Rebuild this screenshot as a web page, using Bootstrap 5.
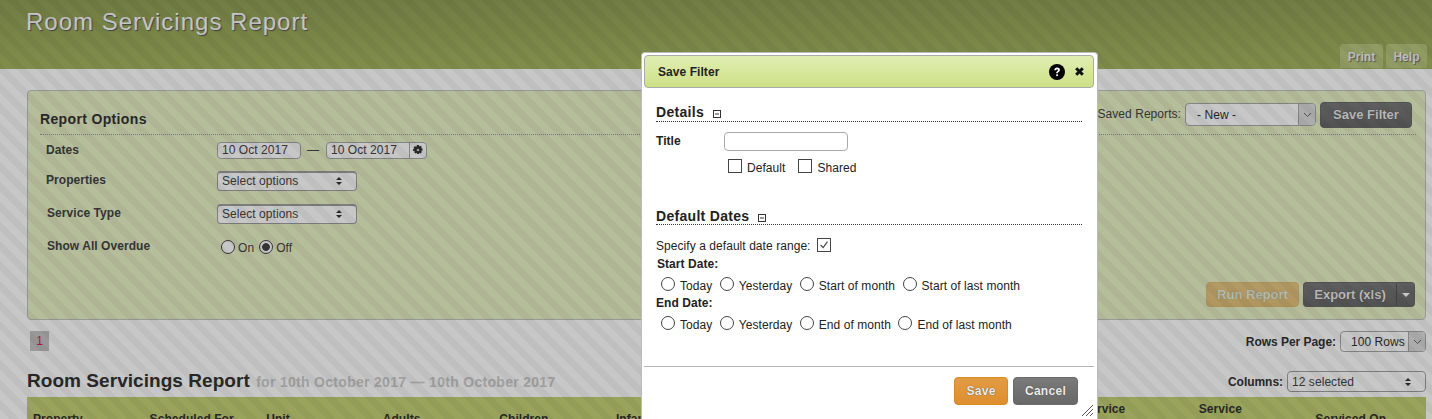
<!DOCTYPE html>
<html lang="en">
<head>
  <meta charset="UTF-8">
  <title>Room Servicings Report</title>
  <link href="https://cdn.jsdelivr.net/npm/bootstrap@5.3.6/dist/css/bootstrap.min.css" rel="stylesheet">
  <style>
    html, body { height: 419px; overflow: hidden; }
    body {
      position: relative;
      font-family: "Liberation Sans", Arial, sans-serif;
      font-size: 12px;
      letter-spacing: .06px;
      color: #333;
      background: #fff;
    }
    .stripe-overlay {
      position: absolute;
      inset: 0;
      z-index: 10;
      background: repeating-linear-gradient(45deg, rgba(0,0,0,.22) 0 7px, rgba(0,0,0,.25) 7px 14px);
    }
    .page-head {
      height: 69px;
      background: linear-gradient(#909f56, #a5b560);
      padding: 8px 5px 0 26px;
    }
    .page-title {
      font-size: 24px;
      line-height: 28px;
      letter-spacing: 1px;
      font-weight: 400;
      color: #fff;
      text-shadow: 1px 1px 1px #555;
      margin: 0;
    }
    .head-tab {
      background: #b9c77f;
      color: #f4f4f4;
      font-weight: 700;
      padding-top: 4px;
      height: 24px;
      width: 43px;
      text-align: center;
      border-radius: 3px 3px 0 0;
      text-shadow: 1px 1px 1px #666;
    }
    .head-tab-help { width: 41px; }
    .head-tabs { gap: 3px; margin-bottom: 1px; }
    .page-main { padding: 21px 6px 0 27px; }
    .opt-panel {
      height: 230px;
      padding: 11px 9px 12px 12px;
      background: #e9f2c6;
      border: 1px solid #c3c3c3;
      border-radius: 4px;
      --bs-card-bg: #e9f2c6;
    }
    .panel-top { height: 33px; border-bottom: 1px dotted #999; }
    .panel-title { font-size: 14px; font-weight: 700; margin: 0; line-height: 16px; padding-bottom: 7px; letter-spacing: .35px; }
    .opt-label { width: 177px; padding-left: 6px; font-weight: 700; color: #444; flex: none; }
    .opt-row { margin-bottom: 13px; }
    .date-input {
      height: 17px;
      width: 84px;
      line-height: 15px;
      padding: 0 4px;
      background: #fff;
      border: 1px solid #a8a8a8;
      border-radius: 4px;
      color: #444;
    }
    .date-dash { color: #444; width: 12px; margin: 0 7px 0 6px; }
    .date-group { padding-right: 0; }
    .date-gear { width: 17px; margin-left: auto; height: 15px; border-left: 1px solid #aaa; padding-right: 1px; }
    .fake-select {
      height: 20px;
      border: 1px solid #a0a0a0;
      border-width: 2px 1px 1px;
      border-radius: 4px;
      background: #fff;
      padding: 0 14px 2px 4px;
      color: #444;
    }
    .w-options { width: 140px; }
    .w-columns { width: 139px; height: 21px; border-width: 1px; padding-bottom: 0; }
    .saved-select {
      height: 23px;
      width: 131px;
      margin-top: 1px;
      border: 1px solid #aaa;
      border-radius: 4px;
      background: #fff;
      padding-left: 11px;
      overflow: hidden;
    }
    .rows-select { height: 21px; width: 86px; border: 1px solid #aaa; border-radius: 4px; background: #fff; padding-left: 10px; overflow: hidden; }
    .select-arrow { width: 17px; align-self: stretch; background: #ddd; border-left: 1px solid #aaa; margin-left: auto; }
    .btn-gray, .btn-orange {
      --bs-btn-padding-y: 0;
      --bs-btn-padding-x: 0;
      --bs-btn-font-size: 13px;
      --bs-btn-font-weight: 700;
      --bs-btn-color: #eee;
      --bs-btn-border-radius: 4px;
      white-space: nowrap;
      text-shadow: 0 0 1px #333;
    }
    .btn-gray { --bs-btn-bg: #757575; --bs-btn-border-color: #6a6a6a; background-image: linear-gradient(#7a7a7a, #686868); }
    .btn-orange { --bs-btn-bg: #e09a3e; --bs-btn-border-color: #d98a24; background-image: linear-gradient(#e39c43, #dd8f2f); }
    .btn-run { width: 93px; height: 25px; margin-right: 4px; opacity: .5; }
    .btn-export { width: 94px; height: 25px; border-radius: 4px 0 0 4px; border-right-color: #555; }
    .btn-caret { width: 18px; height: 25px; border-radius: 0 4px 4px 0; border-left: 0; }
    .btn-save-filter { width: 92px; height: 26px; margin-left: 4px; }
    .actions-row { margin-right: 1px; }
    .pager-one { width: 19px; height: 20px; margin-left: 3px; background: #c4c4c4; color: #e0204a; line-height: 20px; text-align: center; font-size: 12px; }
    .pager-row { margin-top: 11px; height: 40px; }
    .side-label { font-weight: 700; margin-right: 4px; letter-spacing: -.04px; }
    .report-title { font-size: 19px; font-weight: 700; line-height: 20px; margin: 0; letter-spacing: .05px; }
    .report-sub { font-size: 14px; color: #ccc; font-weight: 700; letter-spacing: .3px; margin-left: 1px; }
    .report-row { height: 26px; }
    .report-table { table-layout: fixed; width: 1399px; margin: 0; --bs-table-bg: transparent; }
    .report-table th {
      background: #c4d174;
      font-size: 12px;
      line-height: 20px;
      height: 44px;
      padding: 2px 6px;
      border: 0;
      color: #333;
      vertical-align: middle;
    }
    .save-modal {
      position: absolute;
      left: 641px;
      top: 52px;
      width: 457px;
      height: 367px;
      z-index: 20;
      background: #fff;
      border: 1px solid #bbb;
      border-bottom: 0;
      border-radius: 4px 4px 0 0;
      padding: 2px 3px 0 2px;
    }
    .modal-bar {
      height: 33px;
      padding: 0 9px 0 13px;
      background: linear-gradient(#e1eeb3, #cde086);
      border: 1px solid #aaa;
      border-radius: 4px;
      font-weight: 700;
      color: #222;
    }
    .modal-body-area { padding: 16px 12px 0 12px; height: 278px; color: #222; }
    .sect-head { border-bottom: 1px dotted #333; height: 18px; }
    .sect-head h6 { font-size: 14px; font-weight: 700; line-height: 16px; margin: 0; letter-spacing: .3px; }
    .minus-box { margin-left: 9px; margin-top: 6px; }
    .title-input { width: 124px; height: 19px; border: 1px solid #aaa; border-radius: 4px; padding: 0 4px; }
    .check-input.form-check-input, .dot-input.form-check-input {
      width: 14px;
      height: 14px;
      margin: 0;
      float: none;
      border: 1px solid #444;
      background-color: #fff;
      flex: none;
    }
    .check-input.form-check-input { border-radius: 0; }
    .check-input.form-check-input:checked {
      background-color: #fff;
      border-color: #444;
      background-image: url("data:image/svg+xml,%3csvg xmlns='http://www.w3.org/2000/svg' viewBox='0 0 14 14'%3e%3cpath fill='none' stroke='%23444' stroke-width='1.3' d='M3 7l3 3 5-7'/%3e%3c/svg%3e");
    }
    .dot-input.form-check-input:checked {
      background-color: #fff;
      border-color: #444;
      background-image: radial-gradient(circle, #444 0 3.5px, transparent 4.2px);
    }
    .radio-row { margin-left: 5px; height: 20px; }
    .radio-row label { margin: 3px 7.5px 0 5px; }
    .btn-modal { height: 28px; --bs-btn-font-size: 12px; letter-spacing: .3px; }
    .btn-modal-save { width: 54px; margin-right: 5px; }
    .btn-modal-cancel { width: 65px; }
    .modal-foot { border-top: 1px solid #b5b5b5; height: 50px; padding: 10px 16px 0 0; position: relative; }
    .resize-grip { position: absolute; right: 1px; top: 38px; }
    .on-off label { margin: 3px 5px 0 3px; color: #444; }
    .check-row label { line-height: 14px; }
  </style>
</head>
<body>

  <div class="page-head d-flex justify-content-between">
    <h1 class="page-title">Room Servicings Report</h1>
    <div class="head-tabs d-flex align-self-end">
      <div class="head-tab">Print</div>
      <div class="head-tab head-tab-help">Help</div>
    </div>
  </div>

  <div class="page-main">
    <div class="card opt-panel d-flex flex-column">
      <div class="panel-top d-flex justify-content-between">
        <h5 class="panel-title align-self-end">Report Options</h5>
        <div class="d-flex align-items-start" style="margin-right:4px">
          <span class="me-1" style="line-height:25px;color:#444">Saved Reports:</span>
          <div class="saved-select d-flex align-items-center">
            <span>- New -</span>
            <span class="select-arrow d-flex align-items-center justify-content-center">
              <svg width="9" height="6" viewBox="0 0 9 6"><path d="M1 1l3.5 3.5L8 1" fill="none" stroke="#666"/></svg>
            </span>
          </div>
          <button class="btn btn-gray btn-save-filter" type="button">Save Filter</button>
        </div>
      </div>

      <div class="opt-row d-flex align-items-center" style="margin-top:6px;margin-bottom:12px">
        <div class="opt-label">Dates</div>
        <div class="date-input">10 Oct 2017</div>
        <span class="date-dash">—</span>
        <div class="date-input date-group d-flex align-items-center" style="width:101px">
          <span>10 Oct 2017</span>
          <span class="date-gear d-flex align-items-center justify-content-center">
            <svg width="10" height="10" viewBox="0 0 11 11"><path fill="#333" d="M4.4 0h2.2l.3 1.6 1.4-.9 1.5 1.5-.9 1.4 1.6.3v2.2l-1.6.3.9 1.4-1.5 1.5-1.4-.9-.3 1.6H4.400l-.3-1.600-1.400.9-1.500-1.500.9-1.400L0 6.600V4.400l1.600-.3-.9-1.400 1.500-1.500 1.400.9z"/><circle cx="5.500" cy="5.500" r="1.500" fill="#ccc"/></svg>
          </span>
        </div>
      </div>

      <div class="opt-row d-flex align-items-center">
        <div class="opt-label" style="margin-top:-3px">Properties</div>
        <div class="fake-select w-options d-flex align-items-center justify-content-between">
          <span>Select options</span>
          <svg width="6" height="8" viewBox="0 0 6 8"><path fill="#333" d="M3 0l3 3H0zM0 5h6L3 8z"/></svg>
        </div>
      </div>

      <div class="opt-row d-flex align-items-center">
        <div class="opt-label" style="padding-left:7px;margin-top:-2px">Service Type</div>
        <div class="fake-select w-options d-flex align-items-center justify-content-between">
          <span>Select options</span>
          <svg width="6" height="8" viewBox="0 0 6 8"><path fill="#333" d="M3 0l3 3H0zM0 5h6L3 8z"/></svg>
        </div>
      </div>

      <div class="d-flex align-items-center" style="margin-top:-1px">
        <div class="opt-label" style="padding-left:7px;margin-top:-1px">Show All Overdue</div>
        <div class="on-off d-flex align-items-center" style="margin-left:4px">
          <input class="form-check-input dot-input" type="radio" name="overdue" id="od-on">
          <label for="od-on">On</label>
          <input class="form-check-input dot-input" type="radio" name="overdue" id="od-off" checked>
          <label for="od-off">Off</label>
        </div>
      </div>

      <div class="actions-row d-flex justify-content-end mt-auto">
        <button class="btn btn-orange btn-run" type="button">Run Report</button>
        <button class="btn btn-gray btn-export" type="button">Export (xls)</button>
        <button class="btn btn-gray btn-caret" type="button" aria-label="More export options">
          <svg width="8" height="4" viewBox="0 0 8 4"><path fill="#fff" d="M0 0h8L4 4z"/></svg>
        </button>
      </div>
    </div>

    <div class="pager-row d-flex justify-content-between align-items-start">
      <div class="pager-one">1</div>
      <div class="d-flex align-items-center">
        <span class="side-label">Rows Per Page:</span>
        <div class="rows-select d-flex align-items-center">
          <span>100 Rows</span>
          <span class="select-arrow d-flex align-items-center justify-content-center">
            <svg width="9" height="6" viewBox="0 0 9 6"><path d="M1 1l3.500 3.500L8 1" fill="none" stroke="#666"/></svg>
          </span>
        </div>
      </div>
    </div>

    <div class="report-row d-flex justify-content-between align-items-start">
      <h2 class="report-title">Room Servicings Report <span class="report-sub">for 10th October 2017 — 10th October 2017</span></h2>
      <div class="d-flex align-items-center">
        <span class="side-label">Columns:</span>
        <div class="fake-select w-columns d-flex align-items-center justify-content-between">
          <span>12 selected</span>
          <svg width="6" height="8" viewBox="0 0 6 8"><path fill="#333" d="M3 0l3 3H0zM0 5h6L3 8z"/></svg>
        </div>
      </div>
    </div>

    <table class="table report-table">
      <thead>
        <tr>
          <th>Property</th>
          <th>Scheduled For</th>
          <th>Unit</th>
          <th>Adults</th>
          <th>Children</th>
          <th>Infants</th>
          <th></th>
          <th></th>
          <th></th>
          <th>Service<br>&nbsp;</th>
          <th>Service<br>&nbsp;</th>
          <th>Serviced On</th>
        </tr>
      </thead>
    </table>
  </div>

  <div class="stripe-overlay"></div>

  <div class="save-modal">
    <div class="modal-bar d-flex align-items-center">
      <span>Save Filter</span>
      <svg class="ms-auto" width="16" height="16" viewBox="0 0 16 16" role="img" aria-label="Help">
        <circle cx="8" cy="8" r="8" fill="#000"/>
        <path d="M5.300 6.200c0-1.700 1.200-2.600 2.800-2.600s2.800.9 2.800 2.300c0 1.200-.7 1.700-1.400 2.200-.5.300-.7.600-.7 1.100H7.200c0-1 .3-1.500 1-2 .5-.4.800-.6.800-1.100 0-.5-.4-.8-.9-.8-.6 0-1 .4-1 .9z" fill="#fff"/>
        <rect x="7.200" y="10.300" width="1.700" height="1.800" fill="#fff"/>
      </svg>
      <svg style="margin-left:10px" width="9" height="9" viewBox="0 0 9 9" role="img" aria-label="Close">
        <path d="M1.200 1.200l6.600 6.600M7.800 1.200L1.200 7.800" stroke="#111" stroke-width="3" fill="none"/>
      </svg>
    </div>

    <div class="modal-body-area">
      <div class="sect-head d-flex">
        <h6>Details</h6>
        <svg class="minus-box" width="8" height="8" viewBox="0 0 8 8"><rect x=".5" y=".5" width="7" height="7" fill="none" stroke="#333"/><path d="M2 4h4" stroke="#333"/></svg>
      </div>
      <div class="d-flex align-items-start" style="margin-top:10px">
        <label class="fw-bold" style="width:68px;line-height:19px">Title</label>
        <input class="title-input" type="text">
      </div>
      <div class="check-row d-flex align-items-start" style="margin:8px 0 0 72px;height:15px">
        <input class="form-check-input check-input" type="checkbox" id="f-default">
        <label for="f-default" style="margin:2px 13px 0 5px">Default</label>
        <input class="form-check-input check-input" type="checkbox" id="f-shared">
        <label for="f-shared" style="margin:2px 0 0 5px">Shared</label>
      </div>

      <div class="sect-head d-flex" style="margin-top:34px;height:17px">
        <h6>Default Dates</h6>
        <svg class="minus-box" width="8" height="8" viewBox="0 0 8 8"><rect x=".5" y=".5" width="7" height="7" fill="none" stroke="#333"/><path d="M2 4h4" stroke="#333"/></svg>
      </div>
      <div class="check-row d-flex align-items-start" style="margin-top:13px;height:14px">
        <label for="f-range" style="margin:1px 6px 0 0">Specify a default date range:</label>
        <input class="form-check-input check-input" type="checkbox" id="f-range" checked>
      </div>
      <div class="fw-bold" style="margin:5px 0 0 1px;line-height:14px">Start Date:</div>
      <div class="radio-row d-flex align-items-center" style="margin-top:3px">
        <input class="form-check-input dot-input" type="radio" name="start" id="s1"><label for="s1">Today</label>
        <input class="form-check-input dot-input" type="radio" name="start" id="s2"><label for="s2">Yesterday</label>
        <input class="form-check-input dot-input" type="radio" name="start" id="s3"><label for="s3">Start of month</label>
        <input class="form-check-input dot-input" type="radio" name="start" id="s4"><label for="s4">Start of last month</label>
      </div>
      <div class="fw-bold" style="line-height:14px;margin-top:2px">End Date:</div>
      <div class="radio-row d-flex align-items-center" style="margin-top:3px">
        <input class="form-check-input dot-input" type="radio" name="end" id="e1"><label for="e1">Today</label>
        <input class="form-check-input dot-input" type="radio" name="end" id="e2"><label for="e2">Yesterday</label>
        <input class="form-check-input dot-input" type="radio" name="end" id="e3"><label for="e3">End of month</label>
        <input class="form-check-input dot-input" type="radio" name="end" id="e4"><label for="e4">End of last month</label>
      </div>
    </div>

    <div class="modal-foot d-flex justify-content-end align-items-start">
      <button class="btn btn-orange btn-modal btn-modal-save" type="button">Save</button>
      <button class="btn btn-gray btn-modal btn-modal-cancel" type="button">Cancel</button>
      <svg class="resize-grip" width="11" height="11" viewBox="0 0 11 11"><path d="M0 11L11 0M4 11l7-7M8 11l3-3" stroke="#555" fill="none"/></svg>
    </div>
  </div>

  <script src="https://cdn.jsdelivr.net/npm/bootstrap@5.3.6/dist/js/bootstrap.bundle.min.js"></script>
</body>
</html>
